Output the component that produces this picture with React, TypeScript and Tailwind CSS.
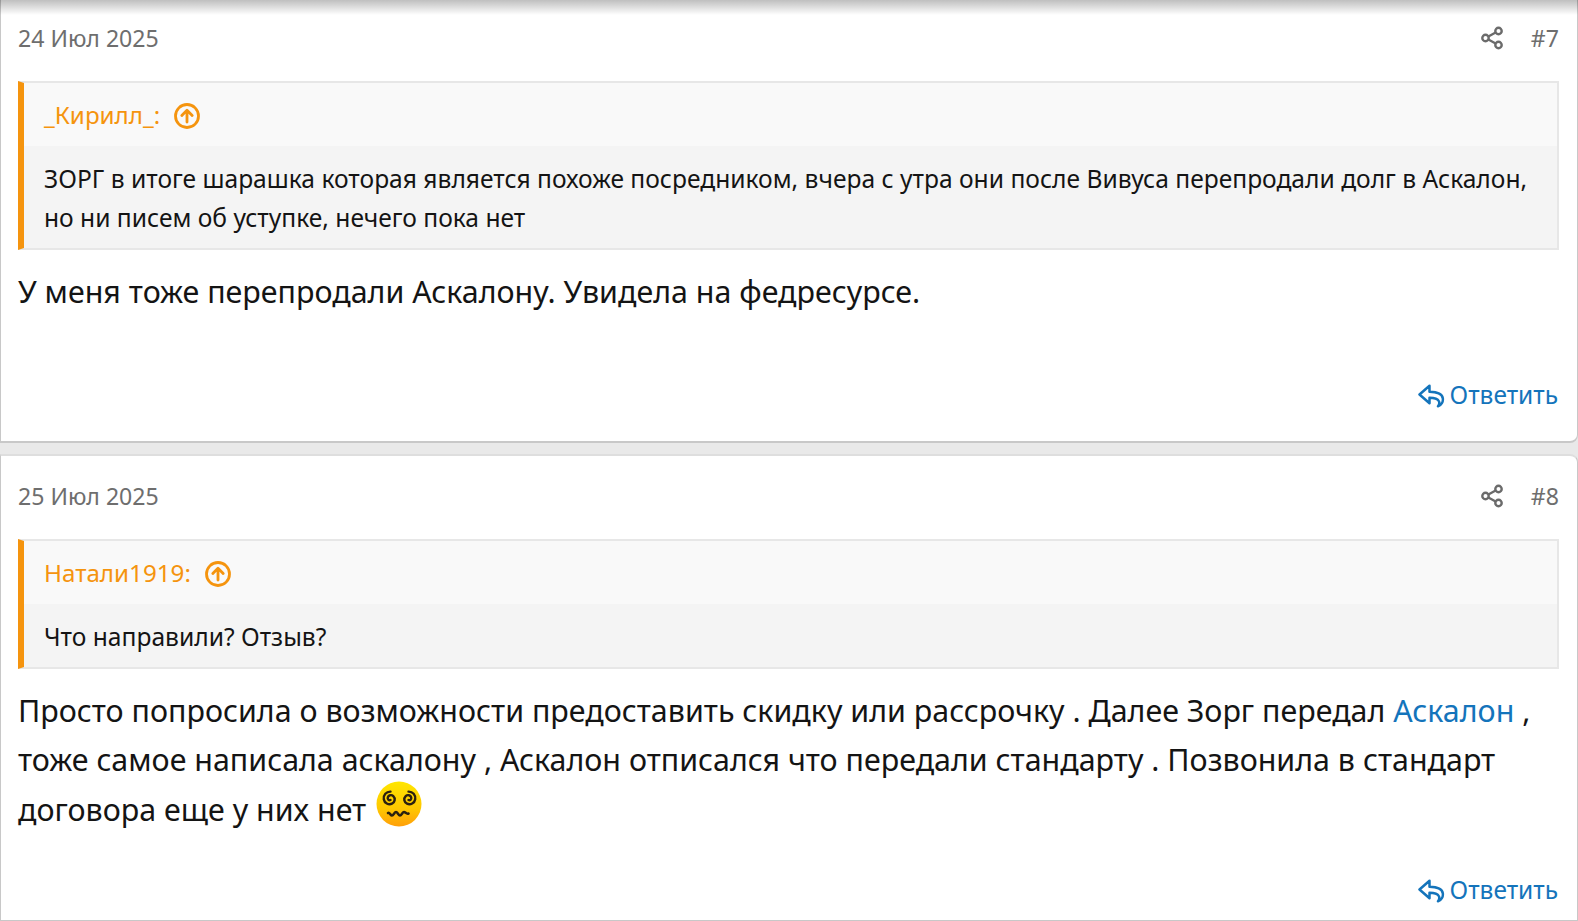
import React from 'react'

const font = "font-['Noto_Sans','Open_Sans',sans-serif]"

const ShareIcon = () => (
  <svg width="24" height="24" viewBox="0 0 24 24" fill="none" stroke="#6b6b6b" strokeWidth="2.4">
    <circle cx="18.500" cy="5" r="3.200" />
    <circle cx="5.500" cy="12" r="3.200" />
    <circle cx="18.500" cy="19" r="3.200" />
    <path d="M8.400 10.500 15.600 6.500M8.400 13.500 15.600 17.500" />
  </svg>
)

const UpIcon = () => (
  <svg width="28" height="28" viewBox="0 0 28 28" fill="none" stroke="#f5940e" strokeWidth="2.800" strokeLinecap="round" strokeLinejoin="round">
    <circle cx="14" cy="14" r="11.500" />
    <path d="M14 20V8.500M8.800 13.500 14 8.200l5.200 5.300" />
  </svg>
)

const ReplyIcon = () => (
  <svg width="27" height="24" viewBox="0 0 27 24" fill="none" stroke="#1474bb" strokeWidth="2.500" strokeLinejoin="round" strokeLinecap="round">
    <path d="M11.500 1.800 1.500 10.500l10 8.700v-5.400c5.500 0 8 .6 9.300 3.200.8 1.500.3 3.800-.8 5.200 3.500-1.200 5.300-4.600 4.800-8-.7-4.600-5-6.400-13.300-6.500z" />
  </svg>
)

const DizzyFace = () => (
  <svg width="46" height="46" viewBox="0 0 46 46" className="inline-block align-baseline ml-[2px] -mt-[3px] -mb-[6px]">
    <defs>
      <linearGradient id="faceGrad" x1="0" y1="0" x2="0" y2="1">
        <stop offset="0" stopColor="#ffe600" />
        <stop offset="0.6" stopColor="#ffc800" />
        <stop offset="1" stopColor="#ff9f0a" />
      </linearGradient>
    </defs>
    <circle cx="23" cy="23" r="22.500" fill="url(#faceGrad)" />
    <g fill="none" stroke="#2b2110" strokeWidth="2.400" strokeLinecap="round">
      <path d="M14.500 19c-1.700.7-3.200-.8-2.700-2.600.6-2.300 3.700-3 5.500-1.300 2.400 2.300 1.600 6.300-1.300 7.600-3.500 1.600-7.600-.7-8.200-4.500-.6-4 2.500-7.800 6.700-7.600" />
      <path d="M32.500 19c1.700.7 3.200-.8 2.700-2.600-.6-2.300-3.700-3-5.500-1.300-2.400 2.300-1.600 6.300 1.300 7.600 3.500 1.600 7.600-.7 8.200-4.500.6-4-2.500-7.800-6.700-7.600" />
      <path d="M12 32c1.500-1 2.500 2.500 4 2.500s2.500-3.500 4-3.500 2.500 3.500 4 3.500 2.500-3.500 4-3.500 2.500 2.500 4.500 1.500" strokeWidth="2.600" />
    </g>
  </svg>
)

const Quote = ({ author, children }: { author: string; children: React.ReactNode }) => (
  <div className="border-2 border-[#e7e7e7] border-l-[6px] border-l-[#f5940e] bg-[#f4f4f4]">
    <div className="flex items-center gap-[13px] bg-[#f9f9f9] h-[63px] pl-5 pt-[2px] text-[24.200px] text-[#f5940e]">
      <span>{author}:</span>
      <UpIcon />
    </div>
    <div className="pl-5 pr-4 pt-[13px] pb-[11px] text-[24.600px] leading-[39px] text-[#141414]">{children}</div>
  </div>
)

const Post = ({ date, num, first, children }: { date: string; num: string; first?: boolean; children: React.ReactNode }) => (
  <div className={`flex flex-col bg-white border-x border-[#c8c8c8] pl-[17px] pr-[18px] ${first ? '-mt-[2px] h-[445px] border-b-2 rounded-br-lg' : 'h-[483px] border-t-2 border-t-[#dedede] rounded-tr-lg'}`}>
    <div className="flex items-center justify-between h-[83px] pb-[2px] shrink-0 text-[23.100px] text-[#6e6e6e]">
      <span>{date}</span>
      <div className="flex items-center gap-[27px]">
        <ShareIcon />
        <span>{num}</span>
      </div>
    </div>
    {children}
    <div className={`mt-auto flex justify-end items-center gap-[5px] h-[49px] mr-[1px] text-[24.500px] text-[#1474bb] ${first ? 'mb-[21px]' : 'mb-[22px]'}`}>
      <ReplyIcon />
      <span>Ответить</span>
    </div>
  </div>
)

export default function App() {
  return (
    <div className={`${font} w-[1578px] h-[921px] overflow-hidden bg-[#e9e9e9] relative border-b border-[#c8c8c8]`}>
      <div className="absolute top-0 left-0 right-0 h-[15px] bg-gradient-to-b from-[#00000040] to-transparent z-10" />
      <Post first date="24 Июл 2025" num="#7">
        <Quote author="_Кирилл_">
          ЗОРГ в итоге шарашка которая является похоже посредником, вчера с утра они после Вивуса перепродали долг в Аскалон, но ни писем об уступке, нечего пока нет
        </Quote>
        <p className="mt-[18px] text-[30.400px] leading-[48.500px] text-[#141414]">У меня тоже перепродали Аскалону. Увидела на федресурсе.</p>
      </Post>
      <div className="h-[11px]" />
      <Post date="25 Июл 2025" num="#8">
        <Quote author="Натали1919">Что направили? Отзыв?</Quote>
        <p className="mt-[18px] text-[30.400px] leading-[48.500px] text-[#141414]">
          Просто попросила о возможности предоставить скидку или рассрочку . Далее Зорг передал <span className="text-[#1474bb]">Аскалон</span> , тоже самое написала аскалону , Аскалон отписался что передали стандарту . Позвонила в стандарт договора еще у них нет <DizzyFace />
        </p>
      </Post>
    </div>
  )
}
